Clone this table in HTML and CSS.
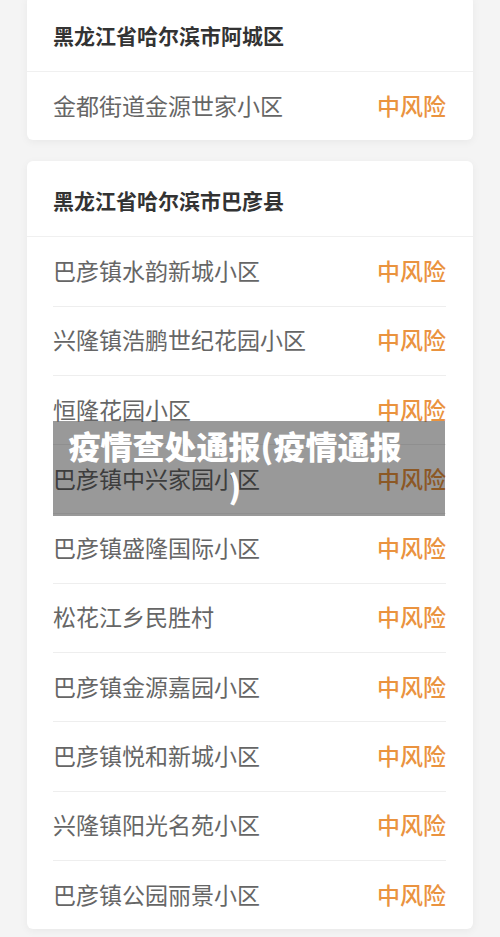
FILE: index.html
```html
<!DOCTYPE html>
<html lang="zh-CN">
<head>
    <meta charset="UTF-8">
    <meta name="viewport" content="width=device-width, initial-scale=1.0">
    <title>疫情查处通报</title>
    <link rel="stylesheet" href="styles.css">
</head>
<body>

    <div class="page">
        <!-- 阿城区 -->
        <div class="card card-first">
            <div class="card-title">黑龙江省哈尔滨市阿城区</div>
            <ul class="area-list">
                <li class="area-row"><span class="area-name">金都街道金源世家小区</span><span class="risk">中风险</span></li>
            </ul>
        </div>

        <!-- 巴彦县 -->
        <div class="card">
            <div class="card-title">黑龙江省哈尔滨市巴彦县</div>
            <ul class="area-list">
                <li class="area-row"><span class="area-name">巴彦镇水韵新城小区</span><span class="risk">中风险</span></li>
                <li class="area-row"><span class="area-name">兴隆镇浩鹏世纪花园小区</span><span class="risk">中风险</span></li>
                <li class="area-row"><span class="area-name">恒隆花园小区</span><span class="risk">中风险</span></li>
                <li class="area-row"><span class="area-name">巴彦镇中兴家园小区</span><span class="risk">中风险</span></li>
                <li class="area-row"><span class="area-name">巴彦镇盛隆国际小区</span><span class="risk">中风险</span></li>
                <li class="area-row"><span class="area-name">松花江乡民胜村</span><span class="risk">中风险</span></li>
                <li class="area-row"><span class="area-name">巴彦镇金源嘉园小区</span><span class="risk">中风险</span></li>
                <li class="area-row"><span class="area-name">巴彦镇悦和新城小区</span><span class="risk">中风险</span></li>
                <li class="area-row"><span class="area-name">兴隆镇阳光名苑小区</span><span class="risk">中风险</span></li>
                <li class="area-row"><span class="area-name">巴彦镇公园丽景小区</span><span class="risk">中风险</span></li>
            </ul>
        </div>
    </div>

    <!-- 标题浮层 -->
    <div class="caption">疫情查处通报(疫情通报)</div>

</body>
</html>
```

FILE: styles.css
```css
body {
    margin: 0;
    background-color: #f4f4f4;
    font-family: "Noto Sans CJK SC", "Noto Sans", sans-serif;
    overflow: hidden;
}

.page {
    padding: 0 27px;
}

/* 卡片 */
.card {
    background-color: #fff;
    border-radius: 6px;
    box-shadow: 0 2px 8px rgba(0, 0, 0, 0.05);
    margin-bottom: 21px;
}

.card-first {
    margin-top: -4px;
}

.card-title {
    padding: 25px 26px 22px;
    line-height: 28px;
    font-size: 21px;
    font-weight: 700;
    color: #333;
    border-bottom: 1px solid #f0f0f0;
}

.area-list {
    list-style: none;
    margin: 0;
    padding: 0;
}

.area-row {
    display: flex;
    justify-content: space-between;
    align-items: center;
    box-sizing: border-box;
    height: 69.3px;
    padding-bottom: 3px;
    margin: 0 27px 0 26px;
    border-top: 1px solid #eeeeee;
}

.area-row:first-child {
    border-top: none;
    height: 68.3px;
}

.area-name {
    font-size: 23px;
    color: #666;
}

.risk {
    font-size: 23px;
    font-weight: 500;
    color: #ea933f;
}

/* 浮层标题 */
.caption {
    position: absolute;
    top: 421px;
    left: 53px;
    width: 392px;
    box-sizing: border-box;
    padding: 4px 42px 11px 14px;
    background-color: rgba(0, 0, 0, 0.4);
    color: #fff;
    font-size: 32px;
    font-weight: 900;
    line-height: 40px;
    text-align: center;
    line-break: anywhere;
}
```
